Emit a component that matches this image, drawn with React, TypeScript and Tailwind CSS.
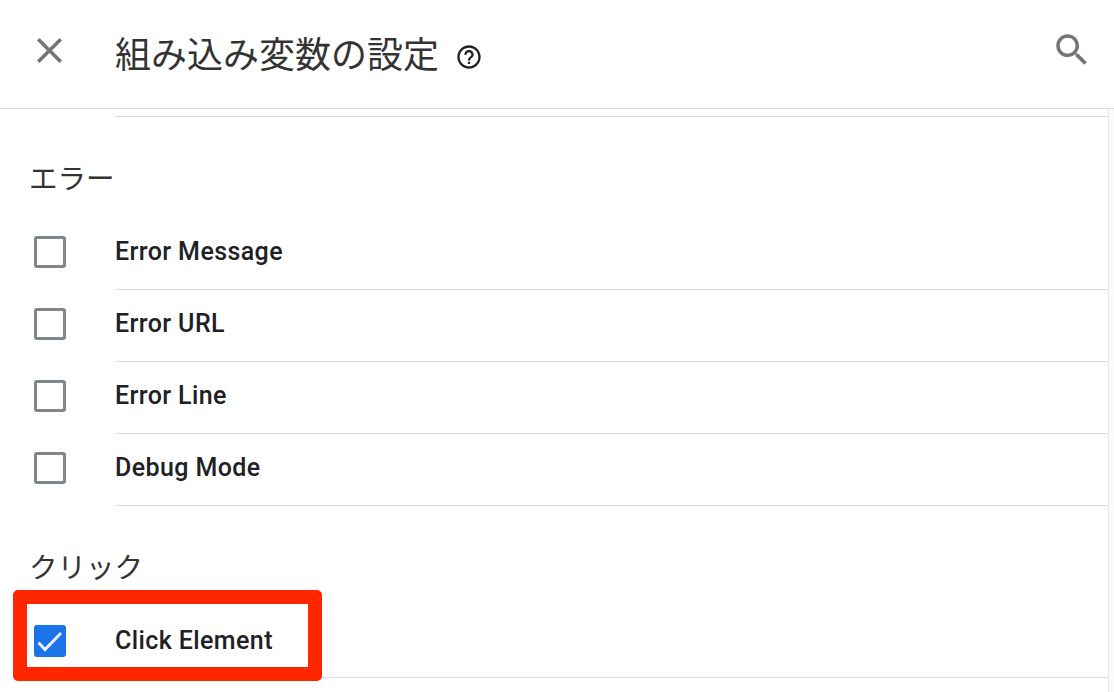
const JP = "font-['Noto_Sans_CJK_JP',sans-serif]";

type RowProps = {
  label: string;
  checked?: boolean;
};

const VariableRow = ({ label, checked = false }: RowProps) => (
  <div className="flex h-[72px] items-center">
    <div className={`flex w-[115px] shrink-0 pl-[34px] ${checked ? 'mb-[2px]' : 'mb-1'}`}>
      {checked ? (
        <div className="h-8 w-8 rounded-[3px] bg-[#1a73e8]">
          <svg viewBox="0 0 32 32" className="h-8 w-8 fill-none stroke-[#e8f0fe] stroke-[3]">
            <path d="M4.5 17.5 11 24.5 27 8" />
          </svg>
        </div>
      ) : (
        <div className="h-8 w-8 rounded-[3px] border-[3px] border-[#80868b]" />
      )}
    </div>
    <div
      className={`flex h-full flex-1 items-center border-b border-[#dadce0] text-[25px] font-medium tracking-[0.4px] text-[#202124] ${
        checked ? 'pb-[2px]' : 'pb-1'
      }`}
    >
      {label}
    </div>
  </div>
);

const SectionTitle = ({ children }: { children: string }) => (
  <h2 className={`pl-[29px] text-[28.5px] leading-10 text-[#333333] ${JP}`}>{children}</h2>
);

export default function App() {
  return (
    <div className="relative h-[692px] w-[1114px] overflow-hidden bg-white font-['Roboto',sans-serif]">
      {/* Header */}
      <header className="flex h-[109px] items-center border-b border-[#dadce0]">
        <div className="mb-2 w-[115px] shrink-0 pl-[28px]">
          <svg viewBox="0 0 24 24" className="h-[43px] w-[43px] fill-[#757575]">
            <path d="M19 6.41 17.59 5 12 10.59 6.41 5 5 6.41 10.59 12 5 17.59 6.41 19 12 13.41 17.59 19 19 17.59 13.41 12z" />
          </svg>
        </div>
        <h1 className={`mb-1 text-[36px] leading-none text-[#333333] ${JP}`}>組み込み変数の設定</h1>
        <svg viewBox="0 0 24 24" className="ml-4 mt-[6px] h-7 w-7 fill-[#202124]">
          <path d="M11 18h2v-2h-2v2zm1-16C6.48 2 2 6.48 2 12s4.48 10 10 10 10-4.48 10-10S17.52 2 12 2zm0 18c-4.41 0-8-3.59-8-8s3.59-8 8-8 8 3.59 8 8-3.59 8-8 8zm0-14c-2.21 0-4 1.79-4 4h2c0-1.1.9-2 2-2s2 .9 2 2c0 2-3 1.75-3 5h2c0-2.25 3-2.5 3-5 0-2.21-1.79-4-4-4z" />
        </svg>
        <svg viewBox="0 0 24 24" className="mb-2 ml-auto mr-[21px] h-[42px] w-[42px] fill-[#757575]">
          <path d="M15.5 14h-.79l-.28-.27C15.41 12.59 16 11.11 16 9.5 16 5.91 13.09 3 9.5 3S3 5.91 3 9.5 5.91 16 9.5 16c1.61 0 3.09-.59 4.23-1.57l.27.28v.79l5 4.99L20.49 19l-4.99-5zm-6 0C7.01 14 5 11.99 5 9.5S7.01 5 9.5 5 14 7.01 14 9.5 11.99 14 9.5 14z" />
        </svg>
      </header>

      {/* List */}
      <div className="flex h-[583px]">
        <main className="flex-1">
          <div className="ml-[115px] h-2 border-b border-[#dadce0]" />
          <div className="pt-[40px]">
            <SectionTitle>エラー</SectionTitle>
            <div className="pt-[21px]">
              <VariableRow label="Error Message" />
              <VariableRow label="Error URL" />
              <VariableRow label="Error Line" />
              <VariableRow label="Debug Mode" />
            </div>
          </div>
          <div className="pt-[40px]">
            <SectionTitle>クリック</SectionTitle>
            <div className="pt-[20px]">
              <VariableRow label="Click Element" checked />
            </div>
          </div>
        </main>
        <div className="w-[6px] shrink-0 border-l border-[#e8e8e8] bg-[#fafafa]" />
      </div>

      {/* Annotation */}
      <div className="pointer-events-none absolute left-[13px] top-[590px] h-[91px] w-[309px] rounded-[5px] border-[14px] border-[#ff2600]" />
    </div>
  );
}
